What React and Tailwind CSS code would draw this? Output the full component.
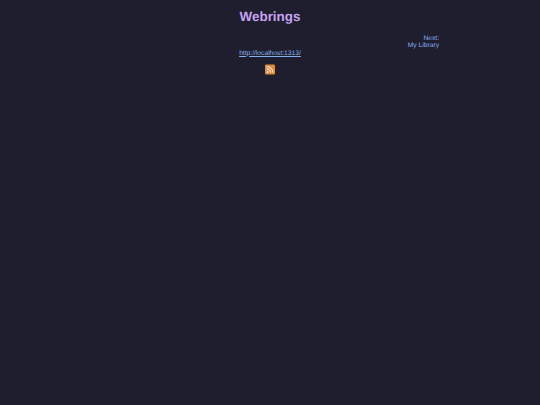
export default function App() {
  return (
    <div className="min-h-[405px] bg-[#1e1e2e] font-['Liberation_Sans',Arial,sans-serif] text-[6.7px] leading-[7.5px] text-[#89b0f0] [text-rendering:geometricPrecision] flex flex-col items-center">
      <h1 className="mt-[9px] text-[13.4px] leading-[16px] font-bold text-[#c6a4f2]">Webrings</h1>
      <div className="mt-[9.5px] w-[338px] flex flex-col items-end text-right">
        <a href="#">Next:</a>
        <a href="#">My Library</a>
      </div>
      <a href="#" className="underline">http://localhost:1313/</a>
      <svg className="mt-[6.5px]" width="10" height="11" viewBox="0 0 10 11" aria-label="RSS">
        <rect y="0.5" width="10" height="10" rx="1" fill="#e08a3c" />
        <circle cx="2.6" cy="7.9" r="1" fill="#fbe6d2" />
        <path d="M1.7 4.9a3.9 3.9 0 0 1 3.9 3.9M1.7 2.5a6.3 6.3 0 0 1 6.3 6.3" fill="none" stroke="#fbe6d2" strokeWidth="1.1" />
      </svg>
    </div>
  );
}
